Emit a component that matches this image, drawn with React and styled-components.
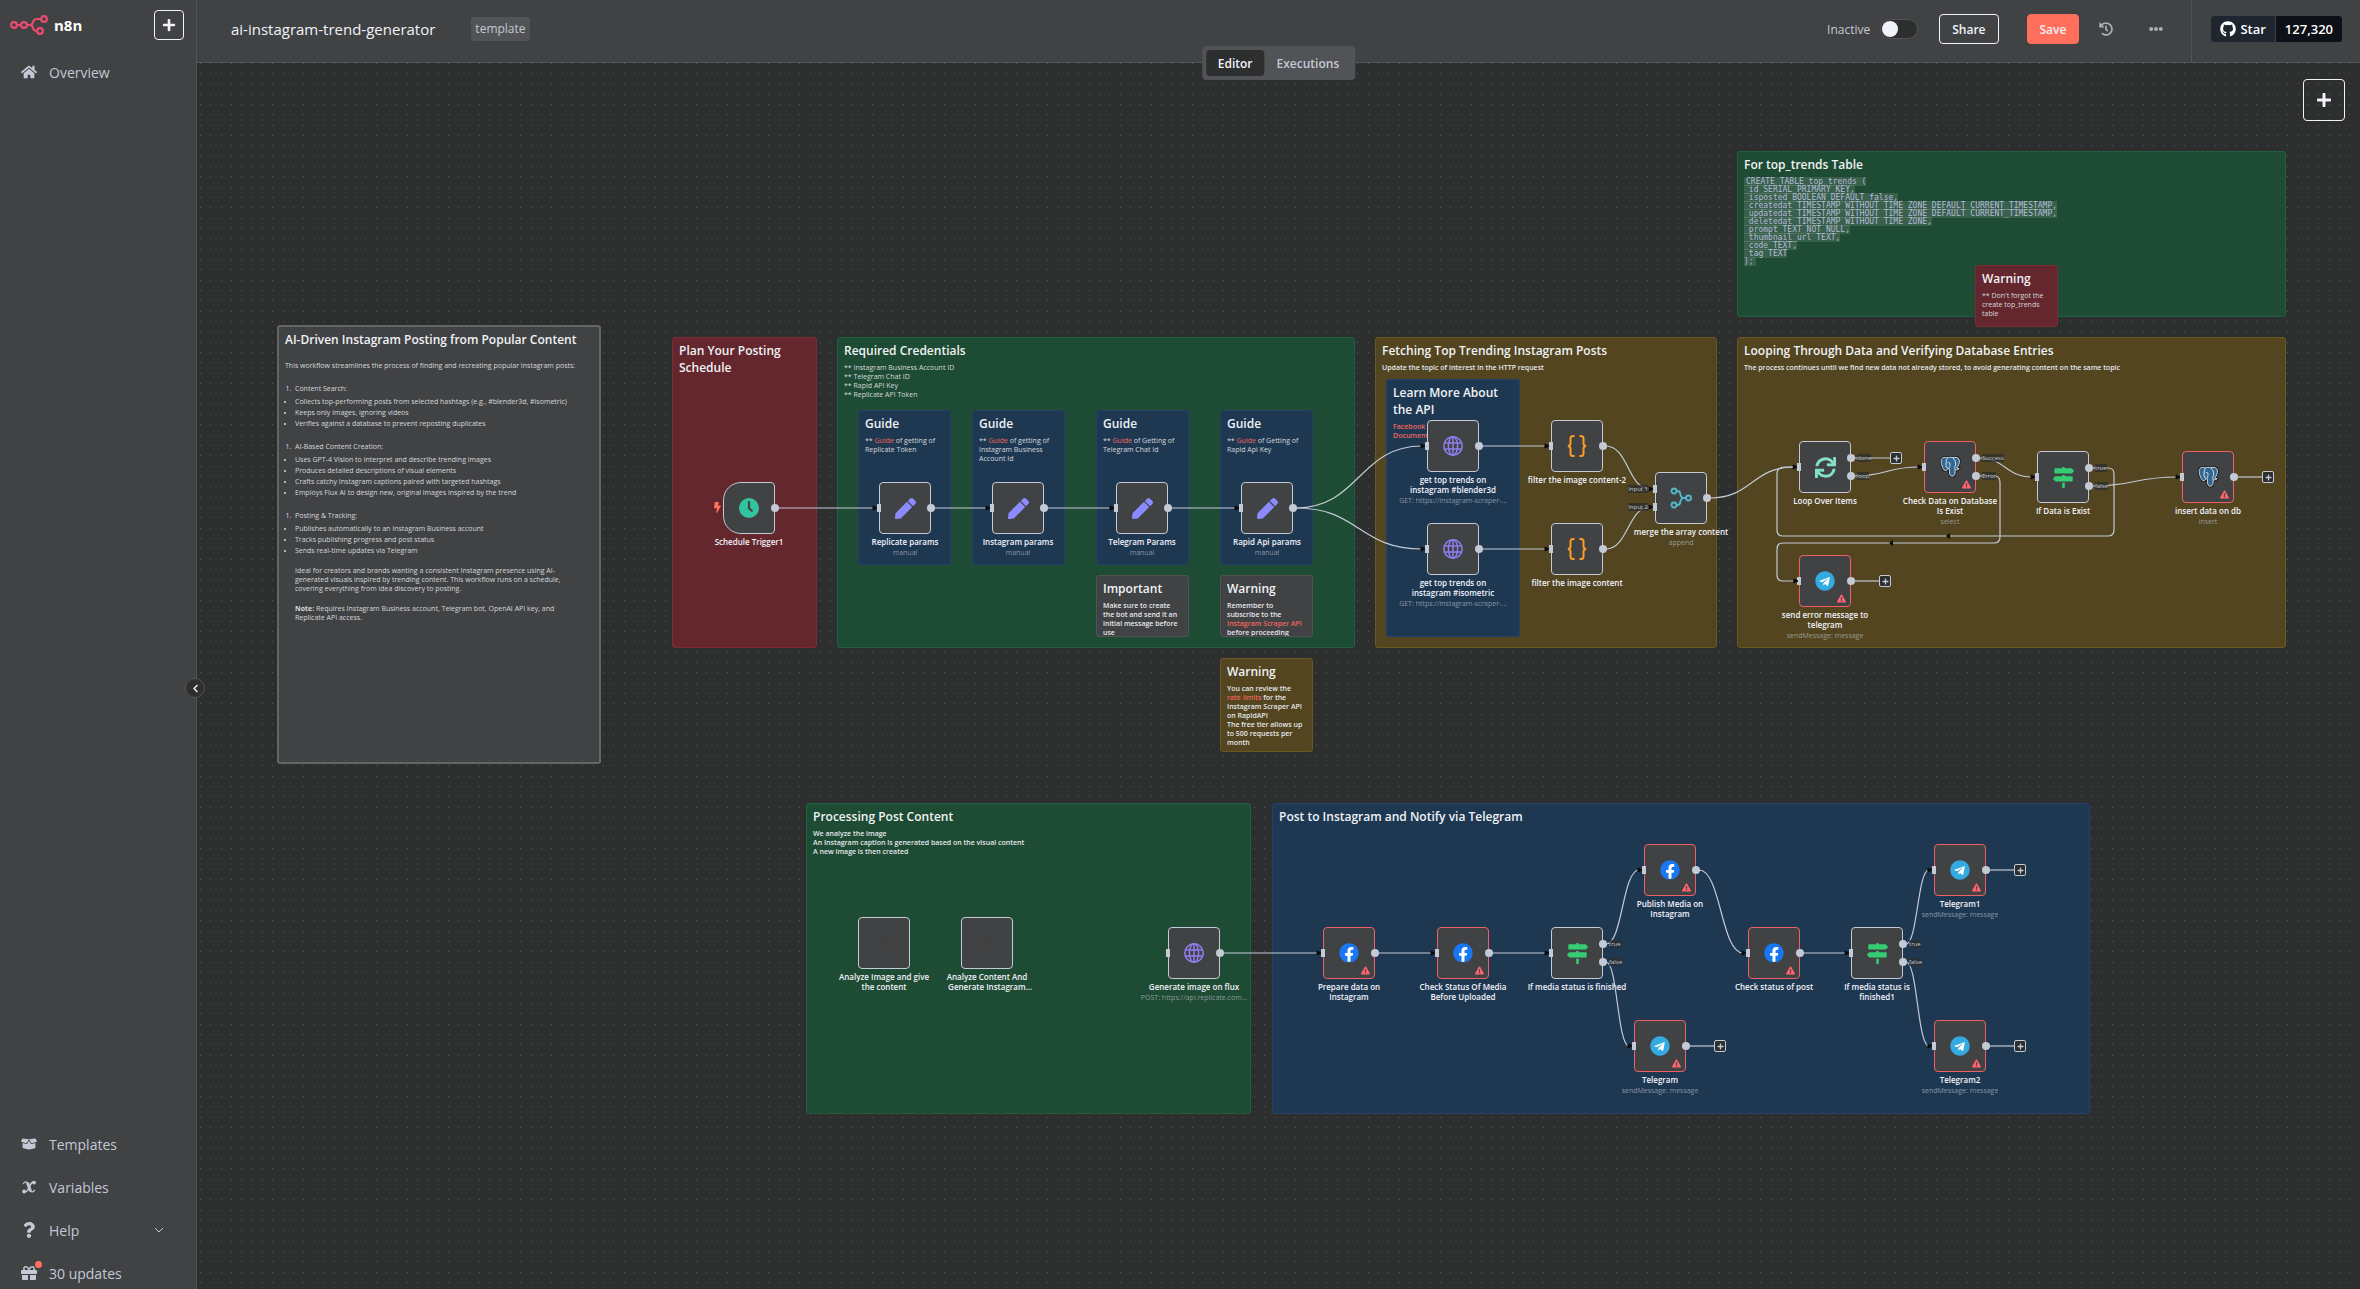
import React from "react";
import styled, { createGlobalStyle, css } from "styled-components";
import {
  FaBolt,
  FaBoxOpen,
  FaChevronLeft,
  FaEllipsisH,
  FaExclamationTriangle,
  FaFacebook,
  FaGift,
  FaGithub,
  FaHistory,
  FaHome,
  FaMapSigns,
  FaPen,
  FaPlus,
  FaQuestion,
  FaSync,
  FaTelegram,
} from "react-icons/fa";

/* ---------- theme ---------- */

const c = {
  canvas: "#2d2e2e",
  panel: "#414244",
  line: "#525356",
  text: "#c3c9d5",
  bright: "#f2f2fa",
  wire: "#c3c9d5",
  primary: "#ff6f5c",
  danger: "#ff6470",
};

const stickyColors = {
  gray: ["#414244", "#525356"],
  green: ["#1e4b33", "#235f3f"],
  red: ["#63272d", "#7d2c36"],
  olive: ["#524520", "#6a5722"],
  blue: ["#1f3852", "#234169"],
};

const NODE = 52;
const PAN = { x: -197, y: -63 };

const GlobalStyle = createGlobalStyle`
  *, *::before, *::after { box-sizing: border-box; }
  html, body, #root { height: 100%; }
  body {
    margin: 0;
    overflow: hidden;
    background: ${c.canvas};
    color: ${c.text};
    font-family: "Open Sans", "Noto Sans", sans-serif;
    font-size: 14px;
  }
  button, input { font: inherit; color: inherit; }
  a { color: inherit; text-decoration: none; }
`;

/* ---------- shell ---------- */

const Shell = styled.div`
  display: grid;
  grid-template-columns: 197px minmax(0, 1fr);
  height: 100vh;
`;

const Sidebar = styled.aside`
  position: relative;
  z-index: 3;
  display: flex;
  flex-direction: column;
  background: ${c.panel};
  border-right: 1px solid ${c.line};
`;

const SidebarTop = styled.div`
  display: flex;
  align-items: center;
  justify-content: space-between;
  padding: 10px 12px 16px 10px;
`;

const Brand = styled.a`
  display: flex;
  align-items: center;
  gap: 6px;
  color: #ffffff;
  font-size: 15px;
  font-weight: 700;
  line-height: 20px;

  svg {
    width: 38px;
    height: 20px;
  }
`;

const OutlineButton = styled.button`
  display: inline-flex;
  align-items: center;
  justify-content: center;
  width: ${(p) => p.$size}px;
  height: ${(p) => p.$size}px;
  padding: 0;
  background: transparent;
  border: 1px solid ${c.bright};
  border-radius: 4px;
  color: ${c.bright};
  font-size: ${(p) => (p.$size > 30 ? 16 : 14)}px;
`;

const Menu = styled.nav`
  display: flex;
  flex-direction: column;
  gap: 11px;
  margin-top: ${(p) => (p.$bottom ? "auto" : "0")};
`;

const MenuItem = styled.a`
  display: flex;
  align-items: center;
  gap: 12px;
  height: 32px;
  padding: 0 32px 0 20px;
  font-size: 14px;
`;

const MenuIcon = styled.span`
  position: relative;
  display: flex;
  align-items: center;
  justify-content: center;
  width: 17px;
  font-size: 16px;
`;

const MenuText = styled.span`
  flex: 1;
`;

const Dot = styled.i`
  position: absolute;
  top: -4px;
  right: -5px;
  width: 7px;
  height: 7px;
  border-radius: 50%;
  background: ${c.primary};
  box-shadow: 0 0 0 1px ${c.panel};
`;

const CollapseButton = styled.button`
  position: absolute;
  top: 678px;
  right: -9px;
  display: flex;
  align-items: center;
  justify-content: center;
  width: 20px;
  height: 20px;
  padding: 0;
  background: ${c.canvas};
  border: 1px solid ${c.line};
  border-radius: 50%;
  color: ${c.bright};
  font-size: 9px;
`;

const Main = styled.main`
  display: grid;
  grid-template-rows: 63px minmax(0, 1fr);
  min-width: 0;
`;

const Header = styled.header`
  position: relative;
  z-index: 2;
  display: flex;
  align-items: center;
  padding-left: 34px;
  background: ${c.panel};
  border-bottom: 1px solid ${c.line};
`;

const Title = styled.h1`
  margin: 0 36px 4px 0;
  color: ${c.bright};
  font-size: 15px;
  font-weight: 400;
  line-height: 20px;
`;

const Tag = styled.span`
  margin-bottom: 4px;
  padding: 0 4px;
  border-radius: 3px;
  background: ${c.line};
  font-size: 12px;
  line-height: 24px;
`;

const Actions = styled.div`
  display: flex;
  align-items: center;
  height: 58px;
  margin: 0 20px 4px auto;
`;

const Activator = styled.label`
  display: flex;
  align-items: center;
  gap: 10px;
  margin-right: 21px;
  font-size: 12px;
`;

const Toggle = styled.input`
  appearance: none;
  display: flex;
  align-items: center;
  width: 38px;
  height: 20px;
  margin: 0;
  padding: 0 1px;
  background: ${c.canvas};
  border: 1px solid ${c.line};
  border-radius: 10px;

  &::before {
    content: "";
    width: 16px;
    height: 16px;
    border-radius: 50%;
    background: ${c.bright};
  }
`;

const TextButton = styled.button`
  height: 30px;
  padding: 0 12px;
  border: 1px solid ${(p) => (p.$primary ? c.primary : c.bright)};
  border-radius: 4px;
  background: ${(p) => (p.$primary ? c.primary : "transparent")};
  color: ${c.bright};
  font-size: 12px;
  font-weight: 600;

  & + & {
    margin-left: 28px;
  }
`;

const IconButton = styled.button`
  display: flex;
  align-items: center;
  justify-content: center;
  width: 30px;
  height: 30px;
  margin-left: ${(p) => p.$gap}px;
  padding: 0;
  background: none;
  border: 0;
  color: #a9aeb9;
  font-size: 14px;
`;

const StarArea = styled.div`
  display: flex;
  align-items: center;
  align-self: stretch;
  padding: 0 18px 4px 19px;
  border-left: 1px solid ${c.line};
`;

const StarLink = styled.a`
  display: flex;
  height: 26px;
  border-radius: 3px;
  overflow: hidden;
  color: #ffffff;
  font-size: 13px;
  font-weight: 600;
  line-height: 26px;
`;

const StarPart = styled.span`
  display: flex;
  align-items: center;
  gap: 4px;
  padding: 0 9px;
  background: ${(p) => (p.$count ? "#0d1117" : "#1f2630")};
  border-left: ${(p) => (p.$count ? "1px solid #3a424d" : "0")};

  svg {
    font-size: 16px;
  }
`;

const Tabs = styled.div`
  position: absolute;
  top: 46px;
  left: 50%;
  display: flex;
  padding: 4px;
  border-radius: 4px;
  background: ${c.line};
  transform: translateX(-50%);
`;

const Tab = styled.button`
  height: 26px;
  padding: 0 12px;
  border: 0;
  border-radius: 4px;
  background: ${(p) => (p.$active ? c.canvas : "transparent")};
  color: ${(p) => (p.$active ? c.bright : c.text)};
  font-size: 12px;
  font-weight: 600;
`;

/* ---------- canvas ---------- */

const Canvas = styled.section`
  position: relative;
  overflow: hidden;
  background: ${c.canvas};
`;

const DotGrid = styled.svg`
  display: block;
  width: 100%;
  height: 100%;
`;

const AddNode = styled.div`
  position: absolute;
  top: 16px;
  right: 15px;
`;

const Layer = styled.div`
  position: absolute;
  left: ${PAN.x}px;
  top: ${PAN.y}px;
`;

const Placed = styled.div.attrs((p) => ({
  style: { left: p.$x, top: p.$y, width: p.$w, height: p.$h },
}))`
  position: absolute;
`;

const Sticky = styled(Placed)`
  padding: 4px 6px 0;
  overflow: hidden;
  background: ${(p) => stickyColors[p.$color][0]};
  border: ${(p) => (p.$selected ? "2px solid #656668" : `1px solid ${stickyColors[p.$color][1]}`)};
  border-radius: 3px;
  color: #d5d9dd;
  font-size: 7px;
  line-height: 9px;
`;

const StickyTitle = styled.h2`
  margin: 0 0 4px;
  color: #f0f2f6;
  font-size: 12px;
  font-weight: 600;
  line-height: 17px;
`;

const StickyText = styled.p`
  margin: 0;
  white-space: pre-line;
  ${(p) =>
    p.$strong &&
    css`
      color: #e6e8ec;
      font-weight: 600;
    `}
`;

const StickyLink = styled.a`
  color: #f0655c;
  font-weight: ${(p) => (p.$strong ? 600 : 400)};
`;

const CodeBlock = styled.p`
  margin: 5px 0 0;
  line-height: 8px;
`;

const Code = styled.code`
  padding: 0 2px;
  border-radius: 1px;
  background: rgba(255, 255, 255, 0.12);
  color: #b5bbda;
  font-family: "DejaVu Sans Mono", monospace;
  font-size: 8px;
  white-space: pre;
`;

const Article = styled.div`
  p {
    margin: 13px 0 14px;
  }
  ol,
  ul {
    margin: 0;
    padding-left: 10px;
  }
  ol li::marker {
    content: "1.  ";
  }
  ul {
    display: flex;
    flex-direction: column;
    gap: 2px;
    margin: 4px 0 14px;
  }
  div {
    margin: -3px 0 0 10px;
  }
  div p {
    margin: 0 0 11px;
  }
`;

const NodeBox = styled.div`
  display: flex;
  align-items: center;
  justify-content: center;
  width: ${NODE}px;
  height: ${NODE}px;
  background: ${c.panel};
  border: 1px solid ${(p) => (p.$error ? "#f05f69" : c.wire)};
  border-radius: ${(p) => (p.$trigger ? "18px 4px 4px 18px" : "4px")};
`;

const NodeLabel = styled.div`
  position: absolute;
  top: ${NODE + 3}px;
  left: 50%;
  width: max-content;
  transform: translateX(-50%);
  text-align: center;
  white-space: pre;
`;

const NodeName = styled.div`
  color: ${c.bright};
  font-size: 8px;
  font-weight: 600;
  line-height: 10px;
`;

const NodeSub = styled.div`
  margin-top: 1px;
  color: rgba(195, 201, 213, 0.65);
  font-size: 7px;
  line-height: 10px;
`;

const OutHandle = styled.i`
  position: absolute;
  right: -4px;
  top: ${(p) => p.$y - 4}px;
  width: 8px;
  height: 8px;
  border-radius: 50%;
  background: ${c.wire};
`;

const InHandle = styled.i`
  position: absolute;
  left: -2px;
  top: ${(p) => p.$y - 4}px;
  width: 4px;
  height: 8px;
  background: ${c.wire};
`;

const PortLabel = styled.span`
  position: absolute;
  top: ${(p) => p.$y - 4}px;
  ${(p) => (p.$side === "in" ? "right: 59px;" : "left: 58px;")}
  background: rgba(45, 46, 46, 0.75);
  color: #c3c9d5;
  font-size: 6px;
  line-height: 8px;
  white-space: nowrap;
`;

const ErrorMark = styled.span`
  position: absolute;
  right: 5px;
  bottom: 4px;
  display: flex;
  color: ${c.danger};
  font-size: 9px;
`;

const TriggerMark = styled.span`
  position: absolute;
  left: -11px;
  top: 20px;
  display: flex;
  color: ${c.primary};
  font-size: 11px;
`;

const PlusHandle = styled.button`
  position: absolute;
  top: ${(p) => p.$y - 6}px;
  left: ${(p) => NODE + p.$dx - 6}px;
  display: flex;
  align-items: center;
  justify-content: center;
  width: 12px;
  height: 12px;
  padding: 0;
  background: ${c.canvas};
  border: 1px solid ${c.wire};
  border-radius: 2px;
  color: ${c.wire};
  font-size: 7px;
`;

const Wires = styled.svg`
  position: absolute;
  left: 0;
  top: 0;
  width: 1px;
  height: 1px;
  overflow: visible;
  pointer-events: none;
`;

const Badge = styled.span`
  display: flex;
  align-items: center;
  justify-content: center;
  width: 20px;
  height: 20px;
  border-radius: 50%;
  background: radial-gradient(circle, #ffffff 0 60%, transparent 62%);
  color: ${(p) => p.$color};
  font-size: 20px;
`;

/* ---------- drawings ---------- */

const Logo = () => (
  <svg viewBox="0 0 38 20" fill="none" stroke="#ea4b71" strokeWidth="2.2" aria-hidden="true">
    <circle cx="4" cy="10" r="2.9" />
    <circle cx="14" cy="10" r="2.9" />
    <circle cx="34" cy="4" r="2.9" />
    <circle cx="30" cy="16" r="2.9" />
    <path d="M7 10h4M17 10h3M31 4h-4c-2.500 0-3.500 1-4 3l-.5 1.500c-.4 1-1 1.500-2.500 1.500 1.500 0 2.100.5 2.500 1.500l.5 1.500c.5 2 1.500 3 4 3" />
  </svg>
);

const VariableIcon = () => (
  <svg width="14" height="14" viewBox="0 0 14 14" fill="none" stroke="currentColor" strokeLinecap="round" aria-hidden="true">
    <path d="M1.500 3.600C2.200 1.600 4.900 1 5.800 3.400l2.400 7c.8 2.400 3.400 1.800 4.300-.2" strokeWidth="1.300" />
    <path d="M5.500 2.800l3 8.400" strokeWidth="3" strokeLinecap="butt" />
    <path d="M12 2.200C9.500 1.300 8.600 4.400 7.400 6.800 6.200 9.200 4.900 12.800 2.300 11.900" strokeWidth="1.500" />
    <circle cx="12" cy="2.600" r="1.900" fill="currentColor" stroke="none" />
    <circle cx="2.100" cy="11.500" r="1.900" fill="currentColor" stroke="none" />
  </svg>
);

const ChevronDown = () => (
  <svg width="10" height="6" viewBox="0 0 10 6" fill="none" stroke="currentColor" aria-hidden="true">
    <path d="M1 1l4 4 4-4" />
  </svg>
);

const ClockIcon = () => (
  <svg width="20" height="20" viewBox="0 0 20 20" aria-hidden="true">
    <circle cx="10" cy="10" r="10" fill="#31c49f" />
    <path d="M10 4v6.200l2.800 2.600" fill="none" stroke="#414244" strokeWidth="2.200" strokeLinecap="round" />
  </svg>
);

const GlobeIcon = () => (
  <svg width="20" height="20" viewBox="0 0 20 20" fill="none" stroke="#8f7ff0" strokeWidth="1.500" aria-hidden="true">
    <circle cx="10" cy="10" r="9.200" />
    <ellipse cx="10" cy="10" rx="4.600" ry="9.200" />
    <path d="M10 1v18M1.500 7h17M1.500 13h17" />
  </svg>
);

const BracesIcon = () => (
  <svg width="20" height="22" viewBox="0 0 20 22" fill="none" stroke="#ff9b26" strokeWidth="2" aria-hidden="true">
    <path d="M7.500 1H6C4.200 1 3.500 1.900 3.500 3.500v4.700C3.500 10 2.500 11 .8 11c1.700 0 2.700 1 2.700 2.800v4.700C3.500 20.100 4.200 21 6 21h1.500" />
    <path d="M12.500 1H14c1.800 0 2.500.9 2.500 2.500v4.700c0 1.800 1 2.800 2.700 2.800-1.700 0-2.700 1-2.700 2.800v4.700c0 1.600-.7 2.500-2.500 2.500h-1.500" />
  </svg>
);

const MergeIcon = () => (
  <svg width="22" height="22" viewBox="0 0 22 22" fill="none" stroke="#54b8c9" strokeWidth="1.900" aria-hidden="true">
    <circle cx="4" cy="4" r="2.500" />
    <circle cx="4" cy="18" r="2.500" />
    <circle cx="18.500" cy="11" r="2.500" />
    <path d="M6.500 4h1.300c1.600 0 2 .8 2.300 2.200C10.600 9 11 11 13.500 11H16M6.500 18h1.300c1.600 0 2-.8 2.300-2.200C10.600 13 11 11 13.500 11" />
  </svg>
);

const elephant = {
  body: "M8.500 2.800C4.500 1 1.200 2.800 1.600 7.400c.4 4.200 2.400 9.600 4.600 10.400 1.400.5 2.400-1 3.600-2.400l1.400.6c.2 3-.1 7.600 2.400 8.200 2.600.6 4.200-.8 4.300-3.600l.2-3.800c1.800.2 3.800-.2 4.800-1.400-1.200.1-2.200 0-2.800-.6 1.800-2.600 3.300-6.400 3-9.200C22.700 2.300 18.500 1.400 15 2.400c-2-.6-4.400-.5-6.500.4z",
  lines: "M9.200 3.200C7 5 7.600 8.400 7.300 10.600c-.2 2.400.8 3.800 2.500 4.600M15 2.600c3 2 4 5.400 3.600 8.400-.2 1.800-1.200 2.600-1.200 4.200l.5 1.300M9.200 8.600c1.400-.8 2.900-.4 2.900 1.400 0 2.400-.9 3.400-1.300 5.400",
};

const ElephantIcon = () => (
  <svg width="22" height="24" viewBox="-1 0 26 27" aria-hidden="true" strokeLinejoin="round">
    <path d={elephant.body} fill="#17191b" stroke="#17191b" strokeWidth="3.200" />
    <path d={elephant.body} fill="#336791" stroke="#dfe6ee" strokeWidth="1.100" />
    <path d={elephant.lines} fill="none" stroke="#dfe6ee" strokeWidth="1.100" />
  </svg>
);

const icons = {
  clock: <ClockIcon />,
  pen: <FaPen size={21} color="#8b8bff" />,
  globe: <GlobeIcon />,
  braces: <BracesIcon />,
  merge: <MergeIcon />,
  loop: <FaSync size={21} color="#84e0cb" />,
  db: <ElephantIcon />,
  signs: <FaMapSigns size={21} color="#35cc74" />,
  facebook: (
    <Badge $color="#1877f2">
      <FaFacebook />
    </Badge>
  ),
  telegram: (
    <Badge $color="#34abe0">
      <FaTelegram />
    </Badge>
  ),
  unknown: <FaQuestion size={12} color="#453f41" />,
};

/* ---------- workflow data ---------- */

const MID = [26];
const PAIR = [17, 35];

const nodes = [
  { id: "trigger", x: 723, y: 482, icon: "clock", name: "Schedule Trigger1", outs: MID, trigger: true },
  { id: "replicate", x: 879, y: 482, icon: "pen", name: "Replicate params", sub: "manual", ins: MID, outs: MID },
  { id: "instagram", x: 992, y: 482, icon: "pen", name: "Instagram params", sub: "manual", ins: MID, outs: MID },
  { id: "telegramP", x: 1116, y: 482, icon: "pen", name: "Telegram Params", sub: "manual", ins: MID, outs: MID },
  { id: "rapid", x: 1241, y: 482, icon: "pen", name: "Rapid Api params", sub: "manual", ins: MID, outs: MID },
  { id: "blender", x: 1427, y: 420, icon: "globe", name: "get top trends on\ninstagram #blender3d", sub: "GET: https://instagram-scraper-...", ins: MID, outs: MID },
  { id: "isometric", x: 1427, y: 523, icon: "globe", name: "get top trends on\ninstagram #isometric", sub: "GET: https://instagram-scraper-...", ins: MID, outs: MID },
  { id: "filter2", x: 1551, y: 420, icon: "braces", name: "filter the image content-2", ins: MID, outs: MID },
  { id: "filter", x: 1551, y: 523, icon: "braces", name: "filter the image content", ins: MID, outs: MID },
  { id: "merge", x: 1655, y: 472, icon: "merge", name: "merge the array content", sub: "append", ins: PAIR, inLabels: ["Input 1", "Input 2"], outs: MID },
  { id: "loop", x: 1799, y: 441, icon: "loop", name: "Loop Over Items", ins: MID, outs: PAIR, outLabels: ["done", "loop"], plus: 45 },
  { id: "check", x: 1924, y: 441, icon: "db", name: "Check Data on Database\nIs Exist", sub: "select", ins: MID, outs: PAIR, outLabels: ["Success", "Error"], error: true },
  { id: "ifData", x: 2037, y: 451, icon: "signs", name: "If Data is Exist", ins: MID, outs: PAIR, outLabels: ["true", "false"] },
  { id: "insert", x: 2182, y: 451, icon: "db", name: "insert data on db", sub: "insert", ins: MID, outs: MID, error: true, plus: 34 },
  { id: "sendError", x: 1799, y: 555, icon: "telegram", name: "send error message to\ntelegram", sub: "sendMessage: message", ins: MID, outs: MID, error: true, plus: 34 },
  { id: "analyze1", x: 858, y: 917, icon: "unknown", name: "Analyze Image and give\nthe content" },
  { id: "analyze2", x: 961, y: 917, icon: "unknown", name: "Analyze Content And\n   Generate Instagram..." },
  { id: "flux", x: 1168, y: 927, icon: "globe", name: "Generate image on flux", sub: "POST: https://api.replicate.com...", ins: MID, outs: MID },
  { id: "prepare", x: 1323, y: 927, icon: "facebook", name: "Prepare data on\nInstagram", ins: MID, outs: MID, error: true },
  { id: "status", x: 1437, y: 927, icon: "facebook", name: "Check Status Of Media\nBefore Uploaded", ins: MID, outs: MID, error: true },
  { id: "ifMedia", x: 1551, y: 927, icon: "signs", name: "If media status is finished", ins: MID, outs: PAIR, outLabels: ["true", "false"] },
  { id: "publish", x: 1644, y: 844, icon: "facebook", name: "Publish Media on\nInstagram", ins: MID, outs: MID, error: true },
  { id: "telegram", x: 1634, y: 1020, icon: "telegram", name: "Telegram", sub: "sendMessage: message", ins: MID, outs: MID, error: true, plus: 34 },
  { id: "checkPost", x: 1748, y: 927, icon: "facebook", name: "Check status of post", ins: MID, outs: MID, error: true },
  { id: "ifMedia1", x: 1851, y: 927, icon: "signs", name: "If media status is\nfinished1", ins: MID, outs: PAIR, outLabels: ["true", "false"] },
  { id: "telegram1", x: 1934, y: 844, icon: "telegram", name: "Telegram1", sub: "sendMessage: message", ins: MID, outs: MID, error: true, plus: 34 },
  { id: "telegram2", x: 1934, y: 1020, icon: "telegram", name: "Telegram2", sub: "sendMessage: message", ins: MID, outs: MID, error: true, plus: 34 },
];

/* source, output index, target, input index */
const edges = [
  ["trigger", 0, "replicate", 0],
  ["replicate", 0, "instagram", 0],
  ["instagram", 0, "telegramP", 0],
  ["telegramP", 0, "rapid", 0],
  ["rapid", 0, "blender", 0],
  ["rapid", 0, "isometric", 0],
  ["blender", 0, "filter2", 0],
  ["isometric", 0, "filter", 0],
  ["filter2", 0, "merge", 0],
  ["filter", 0, "merge", 1],
  ["merge", 0, "loop", 0],
  ["loop", 1, "check", 0],
  ["check", 0, "ifData", 0],
  ["ifData", 1, "insert", 0],
  ["flux", 0, "prepare", 0],
  ["prepare", 0, "status", 0],
  ["status", 0, "ifMedia", 0],
  ["ifMedia", 0, "publish", 0],
  ["ifMedia", 1, "telegram", 0],
  ["publish", 0, "checkPost", 0],
  ["checkPost", 0, "ifMedia1", 0],
  ["ifMedia1", 0, "telegram1", 0],
  ["ifMedia1", 1, "telegram2", 0],
];

/* edges that travel backwards under the nodes */
const returnEdges = [
  { d: "M2093 468H2108Q2114 468 2114 474V530Q2114 536 2108 536H1783Q1777 536 1777 530V474Q1777 467 1785 467H1793", arrow: [1948, 536] },
  { d: "M1980 476H1994Q2000 476 2000 482V537Q2000 543 1994 543H1783Q1777 543 1777 549V575Q1777 581 1783 581H1793", arrow: [1891, 543], end: [1797, 581] },
];

const byId = Object.fromEntries(nodes.map((n) => [n.id, n]));

/* ---------- components ---------- */

const Wire = ({ edge: [from, out, to, inp] }) => {
  const a = byId[from];
  const b = byId[to];
  const sx = a.x + NODE + 3;
  const sy = a.y + a.outs[out];
  const tx = b.x - 5;
  const ty = b.y + b.ins[inp];
  const half = (tx - sx) / 2;
  return (
    <g>
      <path d={`M${sx} ${sy}C${sx + half} ${sy} ${tx - half} ${ty} ${tx} ${ty}`} fill="none" stroke={c.wire} strokeWidth="1.2" />
      <path d={`M${tx - 1} ${ty - 2}l4 2-4 2z`} fill="#0b0b0c" stroke="#0b0b0c" />
    </g>
  );
};

const WorkflowNode = ({ node }) => {
  const { ins = [], outs = [] } = node;
  return (
    <Placed $x={node.x} $y={node.y} $w={NODE} $h={NODE}>
      <NodeBox $error={node.error} $trigger={node.trigger}>
        {icons[node.icon]}
      </NodeBox>
      {node.trigger && (
        <TriggerMark>
          <FaBolt />
        </TriggerMark>
      )}
      {node.error && (
        <ErrorMark>
          <FaExclamationTriangle />
        </ErrorMark>
      )}
      {ins.map((y) => (
        <InHandle key={y} $y={y} />
      ))}
      {outs.map((y) => (
        <OutHandle key={y} $y={y} />
      ))}
      <NodeLabel>
        <NodeName>{node.name}</NodeName>
        {node.sub && <NodeSub>{node.sub}</NodeSub>}
      </NodeLabel>
      {node.plus && (
        <PlusHandle type="button" aria-label="Add node" $y={outs[0]} $dx={node.plus}>
          <FaPlus />
        </PlusHandle>
      )}
    </Placed>
  );
};

const NodePorts = ({ node }) => {
  const { ins = [], outs = [], inLabels = [], outLabels = [] } = node;
  return (
    <Placed $x={node.x} $y={node.y} $w={NODE} $h={0}>
      {inLabels.map((t, i) => (
        <PortLabel key={t} $side="in" $y={ins[i]}>
          {t}
        </PortLabel>
      ))}
      {outLabels.map((t, i) => (
        <PortLabel key={t} $side="out" $y={outs[i]}>
          {t}
        </PortLabel>
      ))}
    </Placed>
  );
};

const Note = ({ x, y, w, h, color, title, selected, children }) => (
  <Sticky as="section" $x={x} $y={y} $w={w} $h={h} $color={color} $selected={selected}>
    <StickyTitle>{title}</StickyTitle>
    {children}
  </Sticky>
);

const sql = `CREATE TABLE top_trends (
 id SERIAL PRIMARY KEY,
 isposted BOOLEAN DEFAULT false,
 createdat TIMESTAMP WITHOUT TIME ZONE DEFAULT CURRENT_TIMESTAMP,
 updatedat TIMESTAMP WITHOUT TIME ZONE DEFAULT CURRENT_TIMESTAMP,
 deletedat TIMESTAMP WITHOUT TIME ZONE,
 prompt TEXT NOT NULL,
 thumbnail_url TEXT,
 code TEXT,
 tag TEXT
);`;

const Notes = () => (
  <>
    <Note x={277} y={325} w={324} h={439} color="gray" selected title="AI-Driven Instagram Posting from Popular Content">
      <Article>
        <p>This workflow streamlines the process of finding and recreating popular Instagram posts:</p>
        <ol>
          <li>Content Search:</li>
        </ol>
        <ul>
          <li>Collects top-performing posts from selected hashtags (e.g., #blender3d, #isometric)</li>
          <li>Keeps only images, ignoring videos</li>
          <li>Verifies against a database to prevent reposting duplicates</li>
        </ul>
        <ol>
          <li>AI-Based Content Creation:</li>
        </ol>
        <ul>
          <li>Uses GPT-4 Vision to interpret and describe trending images</li>
          <li>Produces detailed descriptions of visual elements</li>
          <li>Crafts catchy Instagram captions paired with targeted hashtags</li>
          <li>Employs Flux AI to design new, original images inspired by the trend</li>
        </ul>
        <ol>
          <li>Posting &amp; Tracking:</li>
        </ol>
        <ul>
          <li>Publishes automatically to an Instagram Business account</li>
          <li>Tracks publishing progress and post status</li>
          <li>Sends real-time updates via Telegram</li>
        </ul>
        <div>
          <p>
            Ideal for creators and brands wanting a consistent Instagram presence using AI-
            <br />
            generated visuals inspired by trending content. This workflow runs on a schedule,
            <br />
            covering everything from idea discovery to posting.
          </p>
          <p>
            <strong>Note:</strong> Requires Instagram Business account, Telegram bot, OpenAI API key, and
            <br />
            Replicate API access.
          </p>
        </div>
      </Article>
    </Note>

    <Note x={672} y={337} w={145} h={311} color="red" title="Plan Your Posting Schedule" />

    <Note x={837} y={337} w={518} h={311} color="green" title="Required Credentials">
      <StickyText>{"** Instagram Business Account ID\n** Telegram Chat ID\n** Rapid API Key\n** Replicate API Token"}</StickyText>
    </Note>
    <Note x={858} y={410} w={93} h={155} color="blue" title="Guide">
      <StickyText>
        ** <StickyLink href="#">Guide</StickyLink>
        {" of getting of\nReplicate Token"}
      </StickyText>
    </Note>
    <Note x={972} y={410} w={93} h={155} color="blue" title="Guide">
      <StickyText>
        ** <StickyLink href="#">Guide</StickyLink>
        {" of getting of\nInstagram Business\nAccount Id"}
      </StickyText>
    </Note>
    <Note x={1096} y={410} w={93} h={155} color="blue" title="Guide">
      <StickyText>
        ** <StickyLink href="#">Guide</StickyLink>
        {" of Getting of\nTelegram Chat Id"}
      </StickyText>
    </Note>
    <Note x={1220} y={410} w={93} h={155} color="blue" title="Guide">
      <StickyText>
        ** <StickyLink href="#">Guide</StickyLink>
        {" of Getting of\nRapid Api Key"}
      </StickyText>
    </Note>
    <Note x={1096} y={575} w={93} h={62} color="gray" title="Important">
      <StickyText $strong>{"Make sure to create\nthe bot and send it an\ninitial message before\nuse"}</StickyText>
    </Note>
    <Note x={1220} y={575} w={93} h={62} color="gray" title="Warning">
      <StickyText $strong>
        {"Remember to\nsubscribe to the\n"}
        <StickyLink href="#" $strong>
          Instagram Scraper API
        </StickyLink>
        {"\nbefore proceeding"}
      </StickyText>
    </Note>
    <Note x={1220} y={658} w={93} h={94} color="olive" title="Warning">
      <StickyText $strong>
        {"You can review the\n"}
        <StickyLink href="#" $strong>
          rate limits
        </StickyLink>
        {" for the\nInstagram Scraper API\non RapidAPI\nThe free tier allows up\nto 500 requests per\nmonth"}
      </StickyText>
    </Note>

    <Note x={1375} y={337} w={342} h={311} color="olive" title="Fetching Top Trending Instagram Posts">
      <StickyText $strong>Update the topic of interest in the HTTP request</StickyText>
    </Note>
    <Note x={1386} y={379} w={134} h={258} color="blue" title="Learn More About the API">
      <StickyText>
        <StickyLink href="#" $strong>
          {"Facebook\nDocument"}
        </StickyLink>
      </StickyText>
    </Note>

    <Note x={1737} y={151} w={549} h={166} color="green" title="For top_trends Table">
      <CodeBlock>
        <Code>{sql}</Code>
      </CodeBlock>
    </Note>
    <Note x={1975} y={265} w={83} h={62} color="red" title="Warning">
      <StickyText>{"** Don't forgot the\ncreate top_trends\ntable"}</StickyText>
    </Note>
    <Note x={1737} y={337} w={549} h={311} color="olive" title="Looping Through Data and Verifying Database Entries">
      <StickyText $strong>
        The process continues until we find new data not already stored, to avoid generating content on the same topic
      </StickyText>
    </Note>

    <Note x={806} y={803} w={445} h={311} color="green" title="Processing Post Content">
      <StickyText $strong>
        {"We analyze the image\nAn Instagram caption is generated based on the visual content\nA new image is then created"}
      </StickyText>
    </Note>
    <Note x={1272} y={803} w={818} h={311} color="blue" title="Post to Instagram and Notify via Telegram" />
  </>
);

const Grid = () => (
  <DotGrid aria-hidden="true">
    <defs>
      <pattern id="dots" x="3" y="10" width="31" height="31" patternUnits="userSpaceOnUse">
        {[0, 10, 21].map((x) =>
          [0, 10, 21].map((y) => <rect key={`${x}-${y}`} x={x} y={y} width="1" height="1" fill="#56585a" />)
        )}
      </pattern>
    </defs>
    <rect width="100%" height="100%" fill="url(#dots)" />
  </DotGrid>
);

const Flow = () => (
  <Layer>
    <Notes />
    {nodes.map((n) => (
      <WorkflowNode key={n.id} node={n} />
    ))}
    <Wires aria-hidden="true">
      {edges.map((e) => (
        <Wire key={e.join()} edge={e} />
      ))}
      {returnEdges.map((e) => (
        <g key={e.d}>
          <path d={e.d} fill="none" stroke={c.wire} strokeWidth="1.2" />
          <path d={`M${e.arrow[0] - 2} ${e.arrow[1]}l4-3v6z`} fill="#0b0b0c" />
          {e.end && <path d={`M${e.end[0] - 3} ${e.end[1] - 2}l4 2-4 2z`} fill="#0b0b0c" stroke="#0b0b0c" />}
        </g>
      ))}
      {nodes
        .filter((n) => n.plus)
        .map((n) => (
          <path key={n.id} d={`M${n.x + NODE + 3} ${n.y + n.outs[0]}h${n.plus - 9}`} stroke={c.wire} strokeWidth="1.2" />
        ))}
    </Wires>
    {nodes
      .filter((n) => n.inLabels || n.outLabels)
      .map((n) => (
        <NodePorts key={n.id} node={n} />
      ))}
  </Layer>
);

export default function App() {
  return (
    <>
      <GlobalStyle />
      <Shell>
        <Sidebar>
          <SidebarTop>
            <Brand href="#">
              <Logo />
              n8n
            </Brand>
            <OutlineButton type="button" $size={30} aria-label="Create">
              <FaPlus />
            </OutlineButton>
          </SidebarTop>
          <Menu>
            <MenuItem href="#">
              <MenuIcon>
                <FaHome />
              </MenuIcon>
              <MenuText>Overview</MenuText>
            </MenuItem>
          </Menu>
          <Menu $bottom>
            <MenuItem href="#">
              <MenuIcon>
                <FaBoxOpen />
              </MenuIcon>
              <MenuText>Templates</MenuText>
            </MenuItem>
            <MenuItem href="#">
              <MenuIcon>
                <VariableIcon />
              </MenuIcon>
              <MenuText>Variables</MenuText>
            </MenuItem>
            <MenuItem href="#">
              <MenuIcon>
                <FaQuestion />
              </MenuIcon>
              <MenuText>Help</MenuText>
              <ChevronDown />
            </MenuItem>
            <MenuItem href="#">
              <MenuIcon>
                <FaGift />
                <Dot />
              </MenuIcon>
              <MenuText>30 updates</MenuText>
            </MenuItem>
          </Menu>
          <CollapseButton type="button" aria-label="Collapse sidebar">
            <FaChevronLeft />
          </CollapseButton>
        </Sidebar>
        <Main>
          <Header>
            <Title>ai-instagram-trend-generator</Title>
            <Tag>template</Tag>
            <Actions>
              <Activator htmlFor="active">
                Inactive
                <Toggle id="active" type="checkbox" role="switch" />
              </Activator>
              <TextButton type="button">Share</TextButton>
              <TextButton type="button" $primary>
                Save
              </TextButton>
              <IconButton type="button" aria-label="History" $gap={12}>
                <FaHistory />
              </IconButton>
              <IconButton type="button" aria-label="More" $gap={20}>
                <FaEllipsisH />
              </IconButton>
            </Actions>
            <StarArea>
              <StarLink href="#">
                <StarPart>
                  <FaGithub />
                  Star
                </StarPart>
                <StarPart $count>127,320</StarPart>
              </StarLink>
            </StarArea>
            <Tabs>
              <Tab type="button" $active>
                Editor
              </Tab>
              <Tab type="button">Executions</Tab>
            </Tabs>
          </Header>
          <Canvas>
            <Grid />
            <Flow />
            <AddNode>
              <OutlineButton type="button" $size={42} aria-label="Add node">
                <FaPlus />
              </OutlineButton>
            </AddNode>
          </Canvas>
        </Main>
      </Shell>
    </>
  );
}
